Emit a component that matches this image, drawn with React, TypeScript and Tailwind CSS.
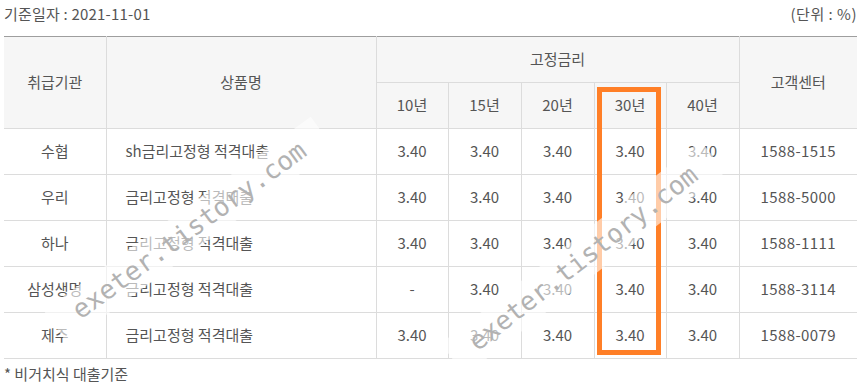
const FONT = { fontFamily: '"Noto Sans CJK KR", "Noto Sans", sans-serif' };

type Row = {
  bank: string;
  product: string;
  rates: string[];
  phone: string;
};

const ROWS: Row[] = [
  { bank: "수협", product: "sh금리고정형 적격대출", rates: ["3.40", "3.40", "3.40", "3.40", "3.40"], phone: "1588-1515" },
  { bank: "우리", product: "금리고정형 적격대출", rates: ["3.40", "3.40", "3.40", "3.40", "3.40"], phone: "1588-5000" },
  { bank: "하나", product: "금리고정형 적격대출", rates: ["3.40", "3.40", "3.40", "3.40", "3.40"], phone: "1588-1111" },
  { bank: "삼성생명", product: "금리고정형 적격대출", rates: ["-", "3.40", "3.40", "3.40", "3.40"], phone: "1588-3114" },
  { bank: "제주", product: "금리고정형 적격대출", rates: ["3.40", "3.40", "3.40", "3.40", "3.40"], phone: "1588-0079" },
];

const YEARS = ["10년", "15년", "20년", "30년", "40년"];

function Watermark({ className }: { className: string }) {
  return (
    <div
      className={`pointer-events-none absolute flex h-[40px] w-[330px] items-center justify-center bg-white/60 ${className}`}
    >
      <span
        className="text-[26px] leading-none text-[#b2b2b2]"
        style={{ fontFamily: '"DejaVu Sans Mono", monospace' }}
      >
        exeter.tistory.com
      </span>
    </div>
  );
}

export default function App() {
  return (
    <div className="relative h-[384px] w-[867px] overflow-hidden bg-white text-[15px] text-[#555]" style={FONT}>
      <div className="ml-[4px] w-[853px]">
        {/* Top info */}
        <div className="flex h-[36px] items-start justify-between leading-[28px]">
          <span className="tracking-[0.2px]">기준일자 : 2021-11-01</span>
          <span className="tracking-[0.5px]">(단위 : %)</span>
        </div>

        {/* Rate table */}
        <div className="relative">
          <table className="w-[853px] table-fixed border-collapse border-t border-t-[#9e9e9e] text-center">
            <colgroup>
              <col className="w-[102px]" />
              <col className="w-[270px]" />
              <col className="w-[72px]" />
              <col className="w-[73px]" />
              <col className="w-[73px]" />
              <col className="w-[72px]" />
              <col className="w-[73px]" />
              <col className="w-[118px]" />
            </colgroup>
            <thead className="bg-[#f6f6f6]">
              <tr className="h-[46px]">
                <th rowSpan={2} className="border-b border-r border-[#dcdcdc] font-normal">취급기관</th>
                <th rowSpan={2} className="border-b border-r border-[#dcdcdc] font-normal">상품명</th>
                <th colSpan={5} className="border-b border-r border-[#dcdcdc] font-normal">고정금리</th>
                <th rowSpan={2} className="border-b border-[#dcdcdc] font-normal">고객센터</th>
              </tr>
              <tr className="h-[46px]">
                {YEARS.map((y) => (
                  <th key={y} className="border-b border-r border-[#dcdcdc] font-normal">{y}</th>
                ))}
              </tr>
            </thead>
            <tbody>
              {ROWS.map((r) => (
                <tr key={r.bank} className="h-[46px]">
                  <td className="border-b border-r border-[#dcdcdc]">{r.bank}</td>
                  <td className="border-b border-r border-[#dcdcdc] pl-[19px] text-left">{r.product}</td>
                  {r.rates.map((v, i) => (
                    <td key={i} className="border-b border-r border-[#dcdcdc]">{v}</td>
                  ))}
                  <td className="border-b border-[#dcdcdc] tracking-[0.4px]">{r.phone}</td>
                </tr>
              ))}
            </tbody>
          </table>

          {/* Highlight on 30년 column */}
          <div className="pointer-events-none absolute left-[593px] top-[51px] h-[268px] w-[64px] border-[5px] border-[#ff7f27]" />

          <Watermark className="left-[20px] top-[174px] -rotate-[36deg]" />
          <Watermark className="left-[414px] top-[202px] -rotate-[38deg]" />
        </div>

        {/* Footnote */}
        <div className="pt-[3px] leading-[24px]">* 비거치식 대출기준</div>
      </div>
    </div>
  );
}
